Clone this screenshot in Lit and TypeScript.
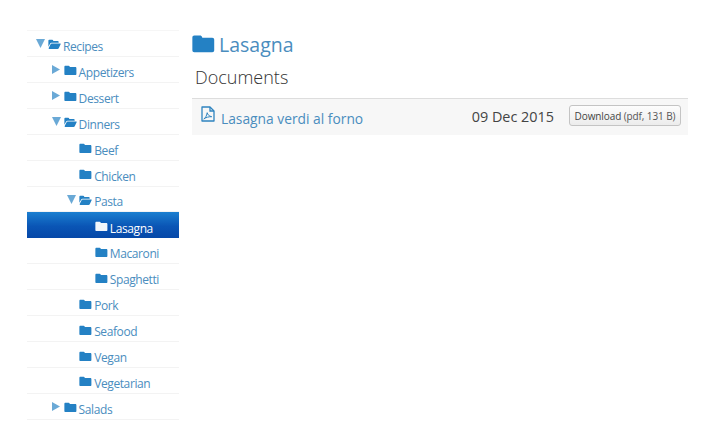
import { LitElement, html, css, svg } from "lit";
import { customElement } from "lit/decorators.js";

const folder = svg`<path d="M1.6 1h4c.7 0 1.1.4 1.3 1l.3.6h6.900c.9 0 1.400.5 1.400 1.400v7.400c0 .9-.5 1.400-1.400 1.400H1.600c-.9 0-1.400-.5-1.400-1.400V2.400C.2 1.500.7 1 1.600 1z"/>`;
const open = svg`<path d="M1.400 1h3.700c.7 0 1 .4 1.200 1l.2.5h5.600c.8 0 1.200.4 1.200 1.200v1H4.200c-.8 0-1.300.3-1.700 1L.2 10V2.300C.2 1.500.6 1 1.400 1z"/><path d="M4.400 5.700h10.700c.7 0 1 .5.7 1.100l-2.400 4.900c-.3.6-.8.9-1.500.9H1.300c-.7 0-1-.5-.7-1.100l2.400-4.900c.3-.6.8-.9 1.400-.9z"/>`;

type Row = { label: string; depth: number; arrow?: "open" | "closed"; selected?: boolean };
const rows: Row[] = [
  { label: "Recipes", depth: 0, arrow: "open" },
  { label: "Appetizers", depth: 1, arrow: "closed" },
  { label: "Dessert", depth: 1, arrow: "closed" },
  { label: "Dinners", depth: 1, arrow: "open" },
  { label: "Beef", depth: 2 },
  { label: "Chicken", depth: 2 },
  { label: "Pasta", depth: 2, arrow: "open" },
  { label: "Lasagna", depth: 3, selected: true },
  { label: "Macaroni", depth: 3 },
  { label: "Spaghetti", depth: 3 },
  { label: "Pork", depth: 2 },
  { label: "Seafood", depth: 2 },
  { label: "Vegan", depth: 2 },
  { label: "Vegetarian", depth: 2 },
  { label: "Salads", depth: 1, arrow: "closed" },
];

@customElement("app-root")
export class AppRoot extends LitElement {
  static styles = css`
    :host {
      display: block;
      width: 715px;
      height: 437px;
      overflow: hidden;
      background: #fff;
      font-family: "Open Sans", sans-serif;
      color: #2b7cb8;
    }
    .page {
      display: flex;
      align-items: flex-start;
      padding: 30px 27px 0 27px;
      gap: 13px;
    }
    .tree {
      flex: 0 0 152px;
      border-top: 1px solid #f6f6f6;
    }
    .row {
      height: 25.93px;
      box-sizing: border-box;
      border-bottom: 1px solid #f3f3f3;
      display: flex;
      align-items: center;
      padding-top: 6px;
      font-size: 12px;
      letter-spacing: -0.4px;
      color: #4a8dbe;
    }
    .row.selected {
      background: linear-gradient(#1b7fd0, #0a55b5 55%, #0648a8);
      color: #fff;
      border-bottom: none;
    }
    .arrow {
      flex: 0 0 12px;
      display: flex;
      justify-content: flex-start;
      margin-top: -5px;
    }
    .arrow svg { fill: #6aa9d6; display: block; }
    .folder { flex: 0 0 auto; fill: #2481c4; margin-right: 2px; margin-top: -3px; display: block; }
    .selected .folder { fill: #f2f6fb; }
    .main { flex: 1; min-width: 0; }
    h1 {
      margin: 2px 0 0;
      display: flex;
      align-items: center;
      gap: 4px;
      font-size: 19.5px;
      font-weight: 400;
      line-height: 26px;
      color: #4a8dbe;
    }
    h1 svg { fill: #2481c4; display: block; margin-left: 0; margin-top: -2px; }
    h2 {
      margin: 6px 0 0 3px;
      font-size: 18px;
      font-weight: 300;
      line-height: 26px;
      color: #333;
    }
    .doc {
      margin-top: 8px;
      height: 37px;
      box-sizing: border-box;
      background: #f7f7f7;
      border-top: 1px solid #ddd;
      display: flex;
      align-items: center;
      padding: 3px 7px 0 9px;
    }
    .doc svg { fill: none; stroke: #2f84c0; display: block; margin-right: 6px; margin-top: -9px; }
    .name { flex: 1; font-size: 13.8px; color: #4a8dbe; }
    .date { font-size: 14.4px; color: #444; margin-right: 15px; margin-top: -4px; }
    button {
      font-family: inherit;
      height: 21px;
      width: 112px;
      padding: 0;
      margin-top: -6px;
      box-sizing: border-box;
      border: 1px solid #c4c4c4;
      border-radius: 3px;
      background: linear-gradient(#fdfdfd, #ececec);
      color: #444;
      font-size: 10px;
      letter-spacing: -0.1px;
      white-space: nowrap;
    }
    button span { font-size: 10px; color: #555; }
  `;

  private renderRow(r: Row) {
    const pad = 9 + r.depth * 15.6;
    const isOpen = r.arrow === "open";
    return html`<div class="row ${r.selected ? "selected" : ""}" style="padding-left:${pad + (r.arrow ? 0 : 12)}px">
      ${r.arrow
        ? html`<span class="arrow">
            <svg width="9" height="9" viewBox="0 0 9 9">
              ${isOpen ? svg`<path d="M0 0h9L4.500 9z"/>` : svg`<path d="M0 0l8 4.500L0 9z"/>`}
            </svg>
          </span>`
        : ""}
      <svg class="folder" width="13" height="11" viewBox="0 0 16 14">${isOpen ? open : folder}</svg>
      <span>${r.label}</span>
    </div>`;
  }

  render() {
    return html`<div class="page">
      <div class="tree">${rows.map((r) => this.renderRow(r))}</div>
      <div class="main">
        <h1>
          <svg width="23" height="20" viewBox="0 0 16 14">${folder}</svg>
          Lasagna
        </h1>
        <h2>Documents</h2>
        <div class="doc">
          <svg width="14" height="16" viewBox="0 0 14 16" stroke-width="1.3">
            <path d="M1 1h8l4 4v10H1z" stroke-linejoin="round"/>
            <path d="M9 1v4h4"/>
            <path d="M2.800 13c1.500-.8 2.800-3 3.400-6.300 .5 2 1.800 3.500 4.500 4-2.800-.1-5.700.6-7.900 2.300z" stroke-width="1"/>
          </svg>
          <span class="name">Lasagna verdi al forno</span>
          <span class="date">09 Dec 2015</span>
          <button>Download <span>(pdf, 131 B)</span></button>
        </div>
      </div>
    </div>`;
  }
}
